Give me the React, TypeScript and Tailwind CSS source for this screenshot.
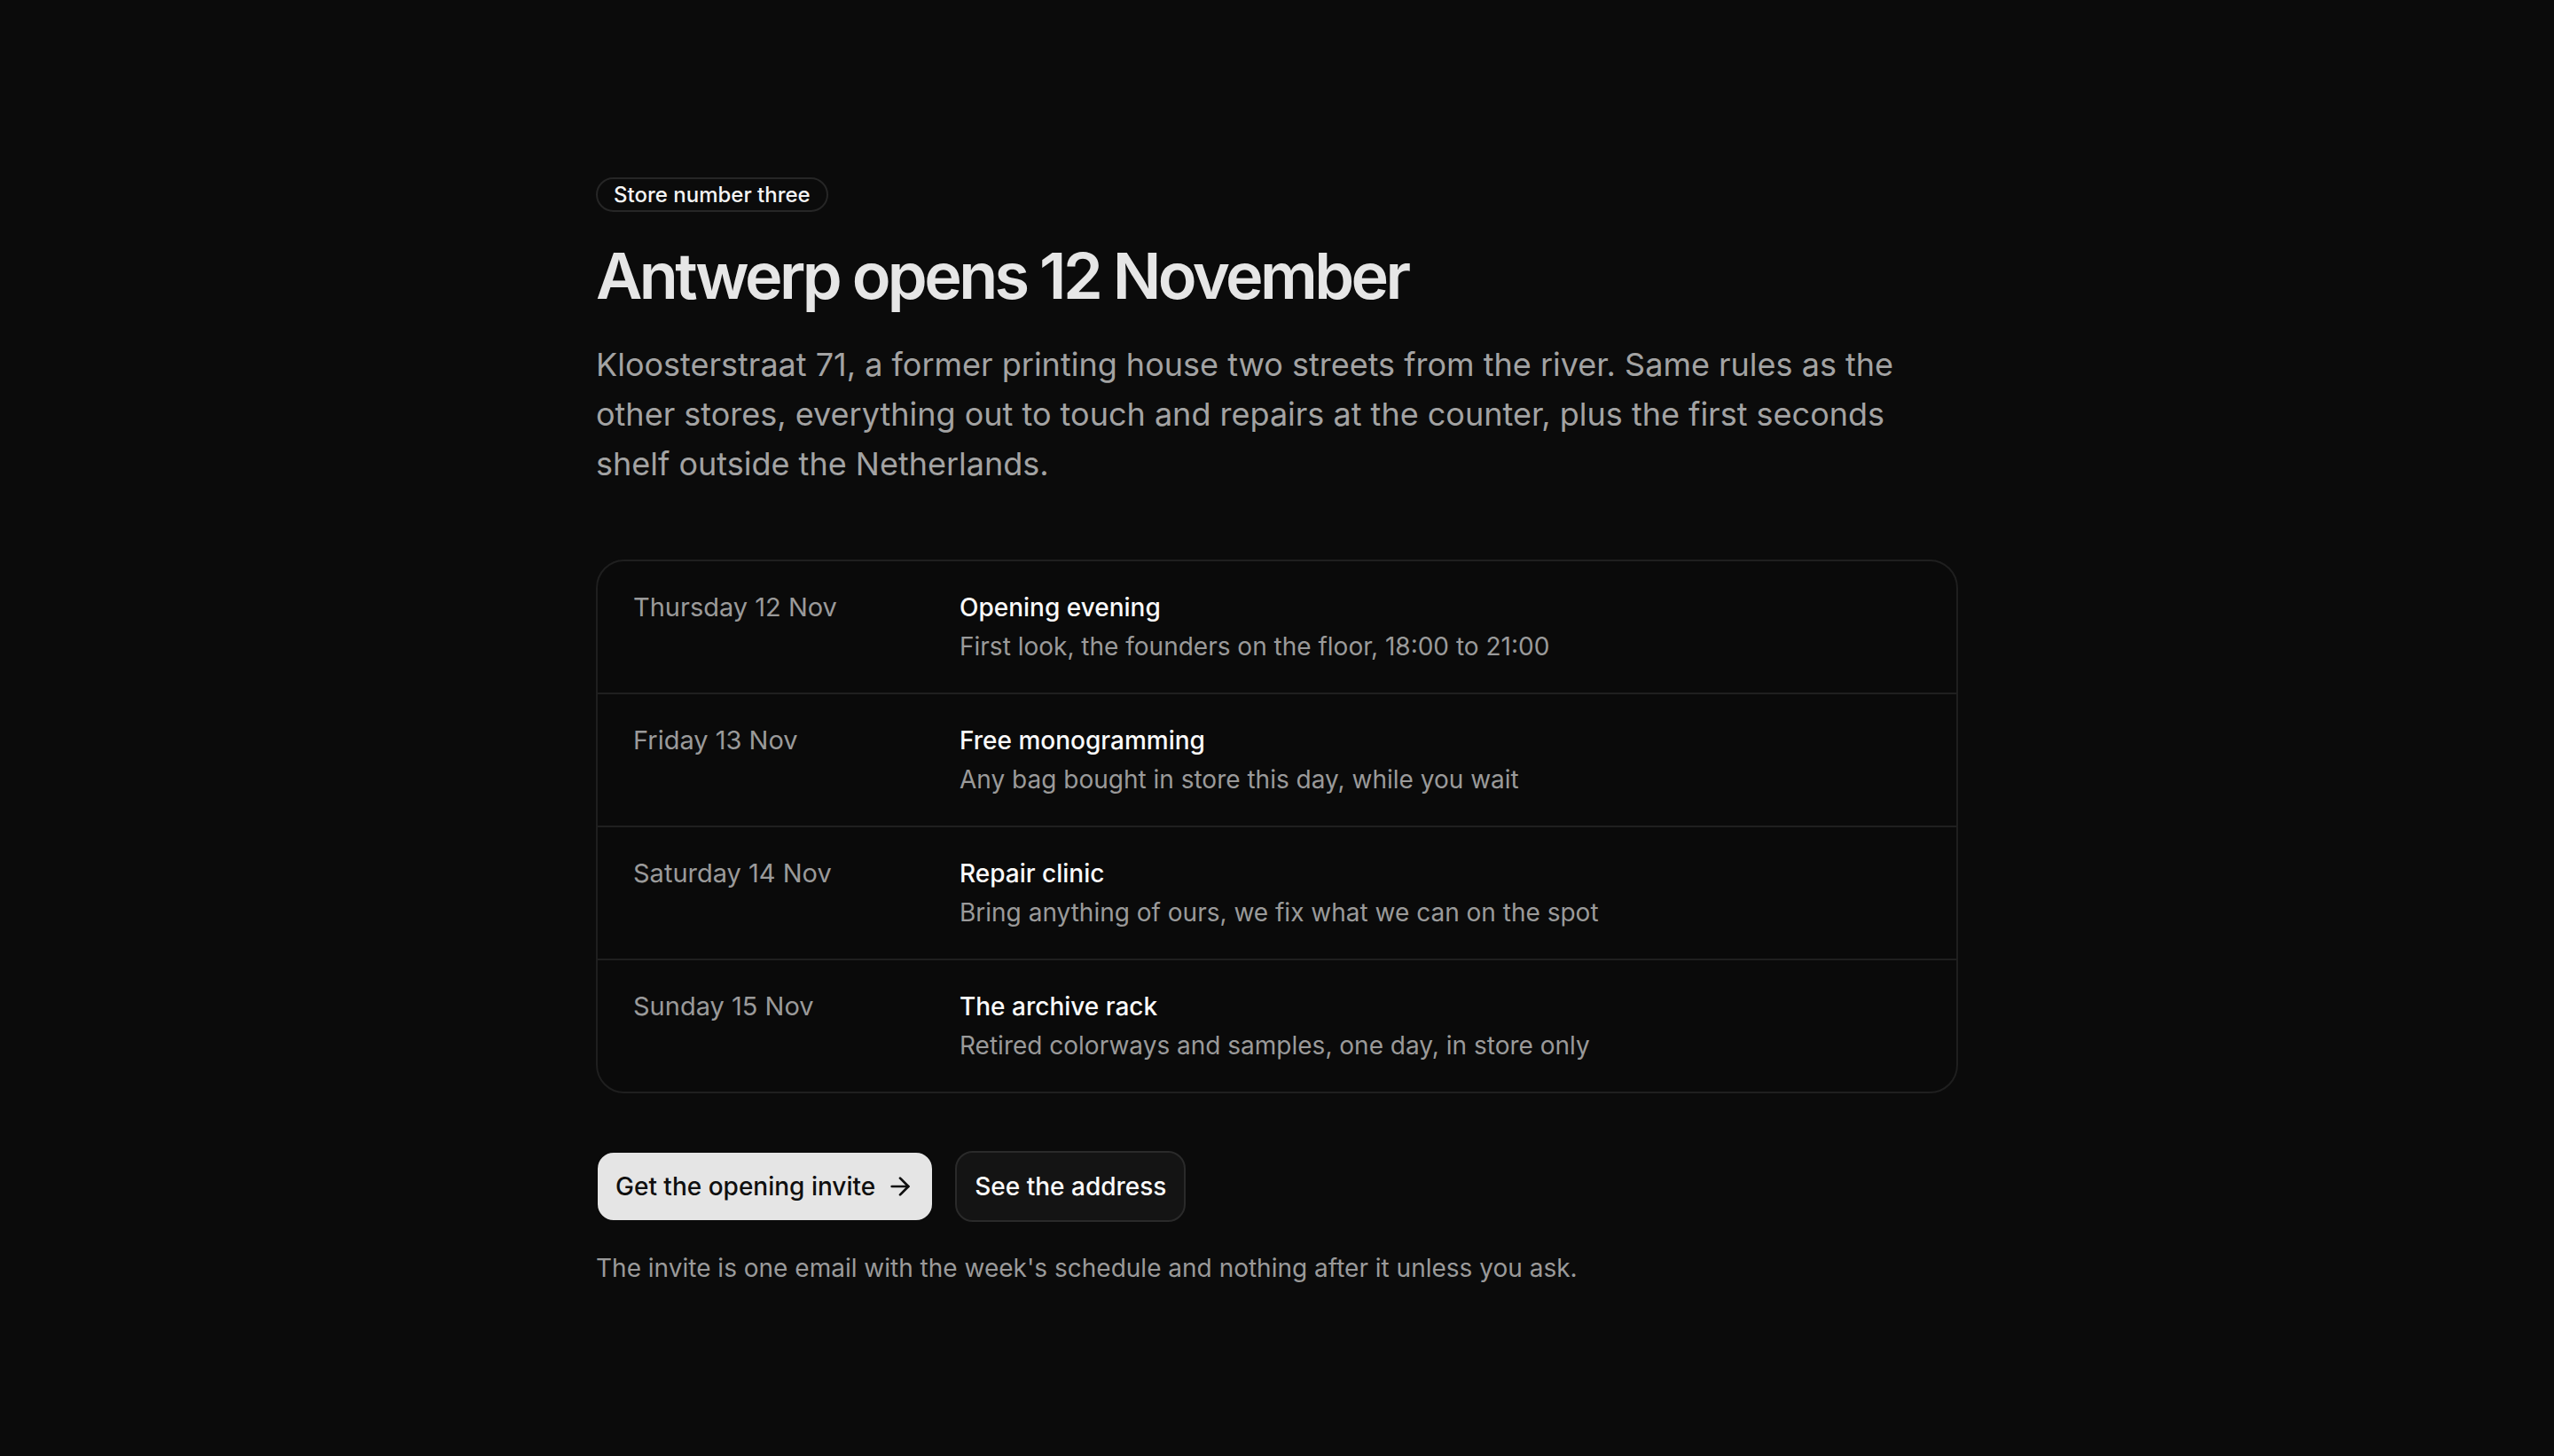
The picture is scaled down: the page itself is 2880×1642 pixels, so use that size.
import React from "react";

const schedule = [
  {
    day: "Thursday 12 Nov",
    title: "Opening evening",
    note: "First look, the founders on the floor, 18:00 to 21:00",
  },
  {
    day: "Friday 13 Nov",
    title: "Free monogramming",
    note: "Any bag bought in store this day, while you wait",
  },
  {
    day: "Saturday 14 Nov",
    title: "Repair clinic",
    note: "Bring anything of ours, we fix what we can on the spot",
  },
  {
    day: "Sunday 15 Nov",
    title: "The archive rack",
    note: "Retired colorways and samples, one day, in store only",
  },
];

function ArrowRight() {
  return (
    <svg
      width="32"
      height="32"
      viewBox="0 0 24 24"
      fill="none"
      stroke="currentColor"
      strokeWidth="2"
      strokeLinecap="round"
      strokeLinejoin="round"
      aria-hidden="true"
    >
      <path d="M5 12h14" />
      <path d="m12 5 7 7-7 7" />
    </svg>
  );
}

export default function App() {
  return (
    <div
      className="min-h-screen w-full bg-[#0b0b0b] text-[#e6e6e6]"
      style={{ fontFamily: "Inter, 'Noto Sans', 'Liberation Sans', sans-serif" }}
    >
      <main className="mx-auto w-[1536px] pt-[200px] pb-[160px]">
        <span className="inline-block rounded-full border-2 border-[#262626] px-[18px] py-[2px] text-[24px] leading-[31px] font-medium text-[#f5f5f5]">
          Store number three
        </span>

        <h1 className="mt-[32px] text-[72px] leading-[80px] font-semibold tracking-[-0.05em] text-[#e6e6e6]">
          Antwerp opens 12 November
        </h1>

        <p className="mt-[32px] text-[36px] leading-[56px] text-[#a3a3a3]">
          Kloosterstraat 71, a former printing house two streets from the river. Same rules as the
          other stores, everything out to touch and repairs at the counter, plus the first seconds
          shelf outside the Netherlands.
        </p>

        <div className="mt-[80px] rounded-[32px] border-2 border-[#1f1f1f] bg-[#0a0a0a]">
          {schedule.map((item, i) => (
            <div
              key={item.day}
              className={`flex px-[40px] py-[30px] ${i > 0 ? "border-t-2 border-[#1f1f1f]" : ""}`}
            >
              <div className="w-[368px] shrink-0 text-[29px] leading-[44px] text-[#9a9a9a]">
                {item.day}
              </div>
              <div className="flex flex-col">
                <div className="text-[28px] leading-[44px] font-medium text-[#fafafa]">
                  {item.title}
                </div>
                <div className="text-[28px] leading-[44px] text-[#9a9a9a]">{item.note}</div>
              </div>
            </div>
          ))}
        </div>

        <div className="mt-[65px] flex items-center gap-[24px]">
          <button className="flex h-[80px] items-center gap-[12px] rounded-[20px] border-2 border-[#0b0b0b] bg-[#e5e5e5] px-[20px] text-[28px] font-medium text-[#0f0f0f]">
            <span>Get the opening invite</span>
            <ArrowRight />
          </button>
          <button className="flex h-[80px] items-center rounded-[20px] border-2 border-[#2a2a2a] bg-[#141414] px-[20px] text-[28px] font-medium text-[#fafafa]">
            See the address
          </button>
        </div>

        <p className="mt-[32px] text-[28px] leading-[40px] text-[#9a9a9a]">
          The invite is one email with the week's schedule and nothing after it unless you ask.
        </p>
      </main>
    </div>
  );
}
